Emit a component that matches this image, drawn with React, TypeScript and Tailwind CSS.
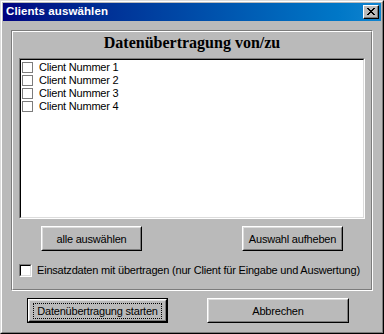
import React from "react"

const clients = ["Client Nummer 1", "Client Nummer 2", "Client Nummer 3", "Client Nummer 4"]

function Button({ label, width, isDefault = false }: { label: string; width: string; isDefault?: boolean }) {
  const face = (
    <div className="h-full border border-t-white border-l-white border-r-black border-b-black">
      <div className="flex h-full items-center justify-center border border-t-[#dcdcdc] border-l-[#dcdcdc] border-r-[#7c7c7c] border-b-[#7c7c7c]">
        {isDefault ? (
          <span className="border border-dotted border-black px-[3px] leading-[14px]">{label}</span>
        ) : (
          <span className="leading-[14px]">{label}</span>
        )}
      </div>
    </div>
  )
  return (
    <div className={`${width} h-[25px] ${isDefault ? "border border-black" : ""}`}>{face}</div>
  )
}

export default function App() {
  return (
    <div
      className="w-[384px] h-[334px] bg-[#bababa] text-[11px] tracking-[-0.2px] text-black"
      style={{ fontFamily: '"Liberation Sans", Arial, sans-serif' }}
    >
      {/* window frame */}
      <div className="w-[384px] h-[334px] border border-t-[#dcdcdc] border-l-[#dcdcdc] border-r-black border-b-black">
        <div className="h-full border border-t-white border-l-white border-r-[#7c7c7c] border-b-[#7c7c7c] p-px">
          {/* title bar */}
          <div className="flex h-[18px] items-center justify-between bg-gradient-to-r from-[#000080] to-[#1084d0] pl-[3px] pr-[2px]">
            <span className="text-[11.5px] font-bold tracking-[0.1px] text-white">Clients auswählen</span>
            <div className="h-[14px] w-[16px] border border-t-white border-l-white border-r-black border-b-black bg-[#bababa]">
              <div className="flex h-full items-center justify-center border-r border-b border-[#7c7c7c]">
                <svg width="8" height="7" viewBox="0 0 8 7">
                  <path d="M0 0h2v1h1v1h2V1h1V0h2v1H7v1H6v1H5v1h1v1h1v1h1v1H6V6H5V5H3v1H2v1H0V6h1V5h1V4h1V3H2V2H1V1H0z" fill="#000" />
                </svg>
              </div>
            </div>
          </div>

          <div className="px-[8px] pt-[9px]">
            {/* group box */}
            <div className="border border-t-[#7c7c7c] border-l-[#7c7c7c] border-r-white border-b-white">
              <div className="border border-t-white border-l-white border-r-[#7c7c7c] border-b-[#7c7c7c] px-[6px]">
                <div
                  className="h-[26px] pt-[2px] text-center text-[16px] font-bold leading-[18px] tracking-normal"
                  style={{ fontFamily: '"Liberation Serif", "Times New Roman", serif' }}
                >
                  Datenübertragung von/zu
                </div>

                {/* list */}
                <div className="h-[161px] border border-t-[#7c7c7c] border-l-[#7c7c7c] border-r-white border-b-white">
                  <div className="h-full border border-t-black border-l-black border-r-[#dcdcdc] border-b-[#dcdcdc] bg-white p-px">
                    {clients.map((c) => (
                      <div key={c} className="flex h-[13px] items-center gap-[6px]">
                        <div className="h-[11px] w-[11px] border border-[#7c7c7c] bg-white" />
                        <span className="leading-[13px]">{c}</span>
                      </div>
                    ))}
                  </div>
                </div>

                <div className="mt-[7px] flex justify-between px-[22px]">
                  <Button label="alle auswählen" width="w-[101px]" />
                  <Button label="Auswahl aufheben" width="w-[101px]" />
                </div>

                <div className="mt-[13px] mb-[12px] flex items-center gap-[5px]">
                  <div className="h-[13px] w-[13px] border border-t-[#7c7c7c] border-l-[#7c7c7c] border-r-white border-b-white">
                    <div className="h-full border border-t-black border-l-black border-r-[#dcdcdc] border-b-[#dcdcdc] bg-white" />
                  </div>
                  <span className="leading-[13px]">Einsatzdaten mit übertragen (nur Client für Eingabe und Auswertung)</span>
                </div>
              </div>
            </div>

            <div className="mt-[7px] flex pl-[16px] gap-[39px]">
              <Button label="Datenübertragung starten" width="w-[141px]" isDefault />
              <Button label="Abbrechen" width="w-[142px]" />
            </div>
          </div>
        </div>
      </div>
    </div>
  )
}
